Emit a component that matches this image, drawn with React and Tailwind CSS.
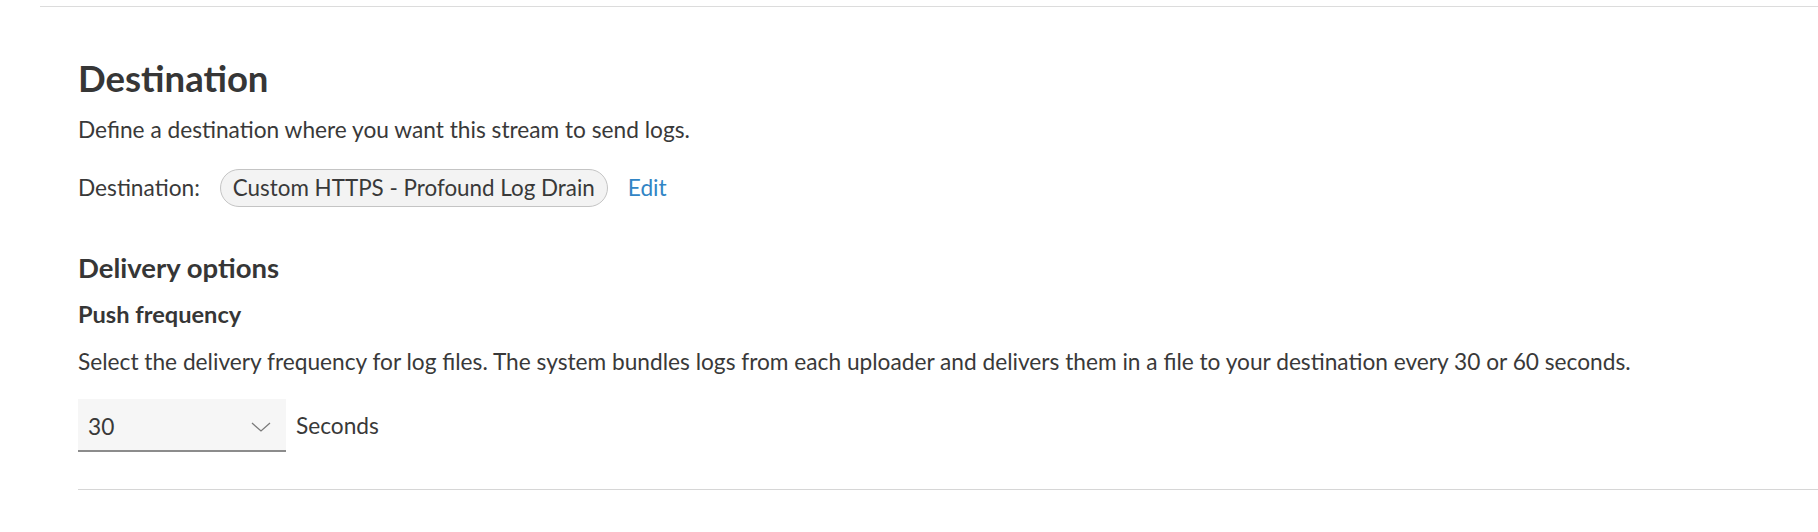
const Chevron = () => (
  <svg width="20" height="10" viewBox="0 0 20 10" fill="none" className="text-[#7a7a7a]">
    <polyline points="1,1 10,9 19,1" stroke="currentColor" strokeWidth="1.3" />
  </svg>
)

const Destination = () => {
  return (
    <div className="min-h-[532px] bg-white font-['Lato',sans-serif] text-[#393939]">
      <div className="ml-[40px] mt-[6px] border-t border-[#dcdcdc]">
        <div className="ml-[38px] border-b border-[#d6d6d6] pt-[49px] pb-[37px]">
          <h1 className="text-[36.5px] leading-[44px] font-bold text-[#363636]">Destination</h1>
          <p className="mt-[15px] text-[22.7px] leading-[30px]">
            Define a destination where you want this stream to send logs.
          </p>

          <div className="mt-[24px] flex items-center h-[38px]">
            <span className="text-[22.7px] leading-[30px]">Destination:</span>
            <span className="ml-[20px] h-[38px] flex items-center px-[12px] rounded-full border border-[#c4c4c4] bg-[#f3f3f3] text-[22.4px] leading-[30px]">
              Custom HTTPS - Profound Log Drain
            </span>
            <a href="#" className="ml-[20px] text-[22.7px] leading-[30px] text-[#3185c5]">Edit</a>
          </div>

          <h2 className="mt-[45px] text-[27.5px] leading-[32px] font-bold text-[#363636]">Delivery options</h2>
          <h3 className="mt-[16px] text-[23.6px] leading-[28px] font-bold text-[#363636]">Push frequency</h3>
          <p className="mt-[19px] text-[22.7px] leading-[30px]">
            Select the delivery frequency for log files. The system bundles logs from each uploader and delivers them in a file to your destination every 30 or 60 seconds.
          </p>

          <div className="mt-[22px] flex items-center">
            <div className="w-[208px] h-[53px] flex items-center justify-between pl-[10px] pr-[15px] pt-[4px] bg-[#f6f6f6] border-b-2 border-[#8c8c8c]">
              <span className="text-[22.7px] leading-[30px]">30</span>
              <Chevron />
            </div>
            <span className="ml-[10px] text-[22.7px] leading-[30px]">Seconds</span>
          </div>
        </div>
      </div>
    </div>
  )
}

export default Destination
